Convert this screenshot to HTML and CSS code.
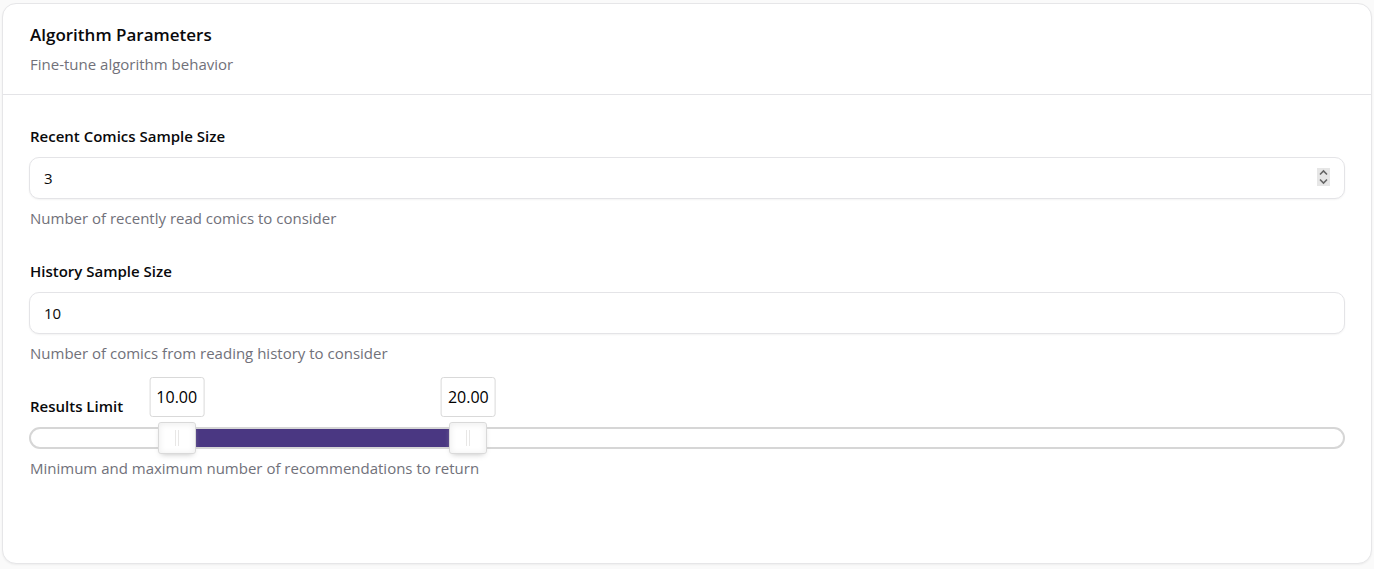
FILE: index.html
```html
<!DOCTYPE html>
<html lang="en">
<head>
<meta charset="utf-8">
<meta name="viewport" content="width=device-width, initial-scale=1">
<title>Algorithm Parameters</title>
<link rel="stylesheet" href="styles.css">
</head>
<body>
<section class="card">
  <header class="card-header">
    <h2 class="card-title">Algorithm Parameters</h2>
    <p class="card-subtitle">Fine-tune algorithm behavior</p>
  </header>
  <form class="card-body">
    <div class="field">
      <label class="label" for="recent">Recent Comics Sample Size</label>
      <input class="input input-active" id="recent" type="number" value="3" aria-describedby="recent-help">
      <p class="help" id="recent-help">Number of recently read comics to consider</p>
    </div>
    <div class="field">
      <label class="label" for="history">History Sample Size</label>
      <input class="input" id="history" type="number" value="10" aria-describedby="history-help">
      <p class="help" id="history-help">Number of comics from reading history to consider</p>
    </div>
    <div class="field">
      <label class="label" for="limit-min">Results Limit</label>
      <div class="slider">
        <div class="slider-fill" style="left: 11.11%; right: 66.67%"></div>
        <input class="slider-range" id="limit-min" type="range" min="5" max="50" value="10">
        <input class="slider-range" type="range" min="5" max="50" value="20" aria-label="Results Limit maximum">
        <output class="tooltip" style="left: 11.11%">10.00</output>
        <output class="tooltip" style="left: 33.33%">20.00</output>
      </div>
      <p class="help">Minimum and maximum number of recommendations to return</p>
    </div>
  </form>
</section>
</body>
</html>
```
FILE: styles.css
```css
* {
  box-sizing: border-box;
}

body {
  margin: 0;
  padding: 3px 2px 5px;
  background: #fafafa;
  color: #09090b;
  font-family: "Segoe UI", "Open Sans", "Noto Sans", sans-serif;
  font-size: 15px;
  line-height: 22px;
}

.card {
  background: #fff;
  border: 1px solid #e6e6e8;
  border-radius: 14px;
  box-shadow: 0 1px 2px rgba(0, 0, 0, 0.05);
}

.card-header {
  display: flex;
  flex-direction: column;
  gap: 6px;
  padding: 19px 26px;
  border-bottom: 1px solid #e4e4e7;
}

.card-title,
.card-subtitle,
.help {
  margin: 0;
  padding-left: 1px;
}

.card-title {
  font-size: 17px;
  font-weight: 600;
  line-height: 24px;
}

.card-subtitle,
.help {
  color: #71717a;
}

.card-body {
  display: flex;
  flex-direction: column;
  gap: 31px;
  padding: 30px 26px 84px;
}

.field {
  display: flex;
  flex-direction: column;
}

.label {
  align-self: flex-start;
  margin-bottom: 10px;
  padding-left: 1px;
  font-weight: 600;
}

.help {
  margin-top: 8px;
}

.input {
  width: 100%;
  height: 42px;
  padding: 0 14px;
  border: 1px solid #e4e4e7;
  border-radius: 10px;
  background: #fff;
  box-shadow: 0 1px 2px rgba(0, 0, 0, 0.05);
  color: inherit;
  font: inherit;
}

.input::-webkit-inner-spin-button {
  appearance: none;
  width: 13px;
  height: 18px;
  opacity: 0;
  background: #e6e6e6 url("data:image/svg+xml,%3Csvg xmlns='http://www.w3.org/2000/svg' viewBox='0 0 13 18' fill='none' stroke='%23666' stroke-width='1.6'%3E%3Cpath d='M3 6.5 6.5 3 10 6.5M3 11.5 6.5 15 10 11.5'/%3E%3C/svg%3E") center / 13px 18px no-repeat;
}

.input-active::-webkit-inner-spin-button,
.input:hover::-webkit-inner-spin-button {
  opacity: 1;
}

.slider {
  position: relative;
  height: 22px;
  border: 2px solid #d6d6d6;
  border-radius: 11px;
  background: #fff;
}

.slider-fill {
  position: absolute;
  top: 0;
  bottom: 0;
  background: #4a3782;
}

/* Extends half a thumb past each end so values line up with the track. */
.slider-range {
  position: absolute;
  top: -7px;
  left: -19px;
  width: calc(100% + 38px);
  height: 32px;
  margin: 0;
  appearance: none;
  background: transparent;
  pointer-events: none;
}

.slider-range::-webkit-slider-thumb {
  appearance: none;
  width: 38px;
  height: 32px;
  border: 1px solid #d9d9d9;
  border-radius: 3px;
  background:
    linear-gradient(#e8e7e6, #e8e7e6) 16px 7px / 1px 16px no-repeat,
    linear-gradient(#e8e7e6, #e8e7e6) 19px 7px / 1px 16px no-repeat,
    #fff;
  box-shadow: inset 0 0 1px #fff, inset 0 1px 7px #ebebeb, 0 3px 6px -3px #bbb;
  pointer-events: auto;
}

.tooltip {
  position: absolute;
  bottom: calc(100% + 12px);
  padding: 8px 6px;
  border: 1px solid #d9d9d9;
  border-radius: 3px;
  background: #fff;
  color: #000;
  font-size: 16px;
  transform: translateX(-50%);
}
```
